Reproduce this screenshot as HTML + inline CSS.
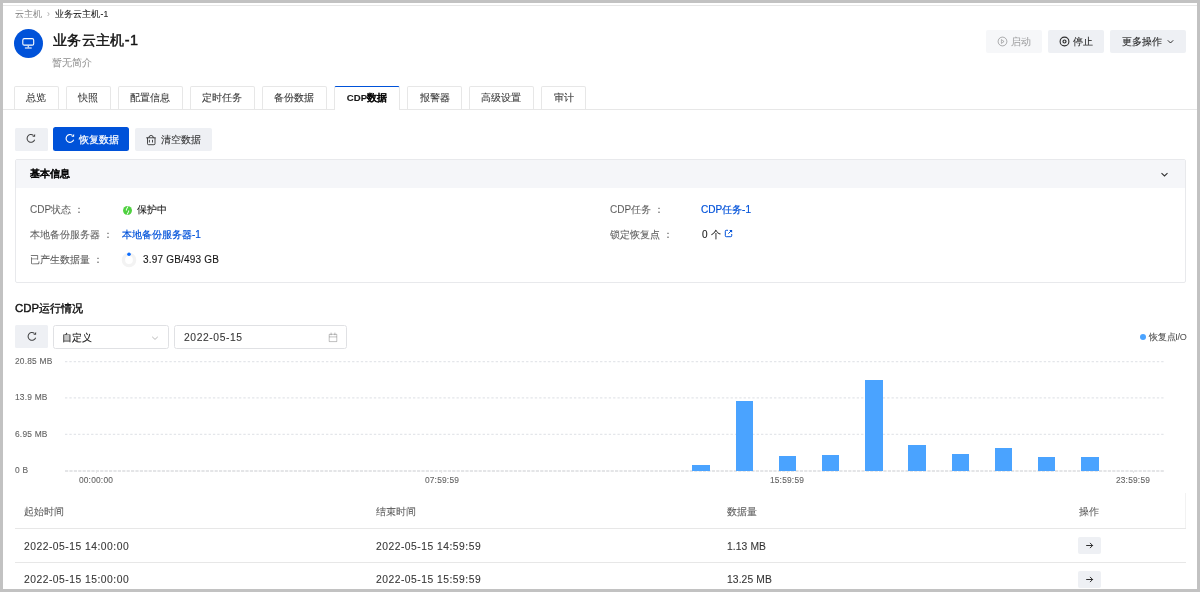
<!DOCTYPE html>
<html><head><meta charset="utf-8">
<style>
*{box-sizing:border-box;margin:0;padding:0}
html,body{width:1200px;height:592px;overflow:hidden;background:#c2c2c2}
body{font-family:"Liberation Sans",sans-serif;color:rgba(0,0,0,.9);font-size:9.6px;position:relative;-webkit-text-stroke:.12px currentColor}
.pg{position:absolute;left:3px;top:3px;width:1194px;height:586px;background:#fff;overflow:hidden}
.a{position:absolute;white-space:nowrap;will-change:transform}
.t{line-height:12px}
.hl{position:absolute;height:1px;background:#e7e7e7}
.btn{will-change:transform;position:absolute;background:#eef0f4;border-radius:2px;display:flex;align-items:center;justify-content:center;color:rgba(0,0,0,.9)}
.tab{will-change:transform;position:absolute;top:83px;height:23px;border:1px solid #e7e7e7;border-bottom:none;border-radius:2px 2px 0 0;background:#fff;display:flex;align-items:center;justify-content:center;color:rgba(0,0,0,.75)}
.tab.on{border-top:1.6px solid #0052d9;color:rgba(0,0,0,.9);font-weight:bold;height:24px}
.lbl{color:rgba(0,0,0,.6)}
.lnk{color:#0052d9;-webkit-text-stroke:.2px #0052d9}
.ax{color:rgba(0,0,0,.6);font-size:8.4px;letter-spacing:.2px}
.td{font-size:10.3px;letter-spacing:.5px;color:rgba(0,0,0,.78)}
.bar{position:absolute;background:#4aa3ff;width:17.5px}
</style></head><body>
<div class="pg">
  <div class="hl" style="left:0;top:2px;width:1194px"></div>
  <!-- breadcrumb -->
  <div class="a t" style="left:11.8px;top:4.5px;font-size:8.5px;color:rgba(0,0,0,.4)">云主机</div>
  <div class="a t" style="left:44px;top:4.5px;font-size:8.8px;color:rgba(0,0,0,.3)">›</div>
  <div class="a t" style="left:51.8px;top:4.5px;font-size:8.6px;letter-spacing:.1px;color:rgba(0,0,0,.85)">业务云主机-1</div>
  <!-- icon -->
  <div class="a" style="left:11.1px;top:26.2px;width:29px;height:29px;border-radius:50%;background:#0052d9">
    <svg width="29" height="29" viewBox="0 0 29 29" style="position:absolute;left:0;top:0">
      <rect x="8.8" y="9.65" width="10.9" height="6.5" rx="1.5" fill="none" stroke="#fff" stroke-width="1.1"/>
      <line x1="14.25" y1="16.7" x2="14.25" y2="18.6" stroke="#fff" stroke-width="1.1"/>
      <line x1="10.9" y1="19" x2="17.7" y2="19" stroke="#fff" stroke-width="1.1"/>
    </svg>
  </div>
  <div class="a" style="left:49.6px;top:27.6px;font-size:14.4px;line-height:18px;letter-spacing:.35px;-webkit-text-stroke:.45px rgba(0,0,0,.9);color:rgba(0,0,0,.9)">业务云主机-1</div>
  <div class="a t" style="left:48.8px;top:54.3px;font-size:10px;color:rgba(0,0,0,.4)">暂无简介</div>
  <!-- top right buttons -->
  <div class="btn" style="left:983px;top:26.5px;width:56.2px;height:23px;padding-top:1px;font-size:10.2px;background:#f6f7f9;color:rgba(0,0,0,.32)">
    <svg width="11" height="11" viewBox="0 0 11 11" style="margin-right:3.5px;margin-top:-1px"><circle cx="5.5" cy="5.5" r="4.4" fill="none" stroke="rgba(0,0,0,.3)" stroke-width="1"/><path d="M4.4 3.6 L7.1 5.5 L4.4 7.4Z" fill="none" stroke="rgba(0,0,0,.3)" stroke-width=".9"/></svg>启动</div>
  <div class="btn" style="left:1045px;top:26.5px;width:56px;height:23px;padding-top:1px;font-size:10.2px;color:rgba(0,0,0,.82)">
    <svg width="11" height="11" viewBox="0 0 11 11" style="margin-right:3.5px;margin-top:-1px"><circle cx="5.5" cy="5.5" r="4.4" fill="none" stroke="rgba(0,0,0,.82)" stroke-width="1.1"/><circle cx="5.5" cy="5.5" r="1.5" fill="none" stroke="rgba(0,0,0,.82)" stroke-width="1.2"/></svg>停止</div>
  <div class="btn" style="left:1107px;top:26.5px;width:76px;height:23px;padding-top:1px;font-size:10.2px;color:rgba(0,0,0,.82)">更多操作<svg width="9" height="9" viewBox="0 0 9 9" style="margin-left:4px;margin-top:-1px"><path d="M1.8 3.3 L4.5 6 L7.2 3.3" fill="none" stroke="rgba(0,0,0,.8)" stroke-width="1"/></svg></div>
  <!-- tabs -->
  <div class="hl" style="left:0;top:106px;width:1194px"></div>
  <div class="tab" style="left:11px;width:44.8px">总览</div>
  <div class="tab" style="left:63.3px;width:44.5px">快照</div>
  <div class="tab" style="left:115.3px;width:64.5px">配置信息</div>
  <div class="tab" style="left:187.3px;width:64.5px">定时任务</div>
  <div class="tab" style="left:259.3px;width:64.5px">备份数据</div>
  <div class="tab on" style="left:331.3px;width:66px">CDP数据</div>
  <div class="tab" style="left:404.2px;width:55px">报警器</div>
  <div class="tab" style="left:466px;width:64.5px">高级设置</div>
  <div class="tab" style="left:538px;width:45px">审计</div>

  <!-- action buttons -->
  <div class="btn" style="left:11.9px;top:124.5px;width:32.5px;height:22.8px;border-radius:1.5px"><svg width="12" height="12" viewBox="0 0 12 12"><path d="M9.66 6.73 A3.9 3.9 0 1 1 8.24 2.21" fill="none" stroke="rgba(0,0,0,.72)" stroke-width="1.05"/><path d="M7.3 3.7 L10.1 3.7 L10.1 0.9 Z" fill="rgba(0,0,0,.72)"/></svg></div>
  <div class="btn" style="left:50.4px;top:124.4px;width:76.2px;height:23.5px;background:#0052d9;color:#fff;font-size:10.2px;-webkit-text-stroke:.2px #fff;border-radius:2.5px">
    <span style="display:inline-block;width:12px;height:12px;margin-right:3px;margin-top:1px"><svg width="12" height="12" viewBox="0 0 12 12"><path d="M9.66 6.73 A3.9 3.9 0 1 1 8.24 2.21" fill="none" stroke="#fff" stroke-width="1.15"/><path d="M7.3 3.7 L10.1 3.7 L10.1 0.9 Z" fill="#fff"/></svg></span><span style="position:relative;top:1px">恢复数据</span></div>
  <div class="btn" style="left:132.3px;top:124.5px;width:76.5px;height:22.8px;font-size:10.2px;color:rgba(0,0,0,.75)">
    <svg width="12" height="12" viewBox="0 0 12 12" style="margin-right:4px;margin-top:1px"><path d="M1.2 3.8 H10.7 M3.9 3.8 A2.2 2.4 0 0 1 8.3 3.8 M2.5 3.8 V9.6 Q2.5 10.7 3.6 10.7 H8.9 Q10 10.7 10 9.6 V3.8 M4.4 5.8 V8.5 M7.5 5.8 V8.5" fill="none" stroke="rgba(0,0,0,.7)" stroke-width="1"/></svg><span style="position:relative;top:1px">清空数据</span></div>

  <!-- basic info panel -->
  <div class="a" style="left:11.6px;top:156.3px;width:1171px;height:123.5px;border:1px solid #e8e9ec;border-radius:2px">
    <div style="position:absolute;left:0;top:0;right:0;height:27.8px;background:#f5f6f9"></div>
  </div>
  <div class="a t" style="left:27px;top:164.5px;font-size:10px;font-weight:bold">基本信息</div>
  <svg class="a" style="left:1157px;top:167px" width="9" height="9" viewBox="0 0 9 9"><path d="M1.5 3.2 L4.5 6 L7.5 3.2" fill="none" stroke="rgba(0,0,0,.8)" stroke-width="1.1"/></svg>

  <div class="a t lbl" style="left:27px;top:201px;font-size:10px">CDP状态 ：</div>
  <div class="a t lbl" style="left:27px;top:225.5px;font-size:10px">本地备份服务器 ：</div>
  <div class="a t lbl" style="left:27px;top:250.5px;font-size:10px">已产生数据量 ：</div>
  <svg class="a" style="left:120.1px;top:202.6px" width="9" height="9" viewBox="0 0 9 9"><circle cx="4.5" cy="4.5" r="4.45" fill="#4fd140"/><path d="M5 0.3 L3.1 4.1 L5.9 4.9 L4 8.7" fill="none" stroke="#fff" stroke-width="1"/><circle cx="4.5" cy="4.5" r=".9" fill="#4fd140"/></svg>
  <div class="a t" style="left:133.5px;top:201px;font-size:10px">保护中</div>
  <div class="a t lnk" style="left:119px;top:225.5px;font-size:10px">本地备份服务器-1</div>
  <svg class="a" style="left:118px;top:249px" width="16" height="16" viewBox="0 0 16 16"><circle cx="8" cy="8" r="5.6" fill="none" stroke="#f3f3f3" stroke-width="3.4"/><circle cx="8" cy="2.2" r="1.8" fill="#0a6cff"/></svg>
  <div class="a t" style="left:139.5px;top:250.5px;font-size:10px;letter-spacing:.2px">3.97 GB/493 GB</div>

  <div class="a t lbl" style="left:606.5px;top:201px;font-size:10px">CDP任务 ：</div>
  <div class="a t lbl" style="left:606.5px;top:225.5px;font-size:10px">锁定恢复点 ：</div>
  <div class="a t lnk" style="left:698.3px;top:201px;font-size:10px">CDP任务-1</div>
  <div class="a t" style="left:698.6px;top:225.5px;font-size:10px;word-spacing:.6px">0 个</div>
  <svg class="a" style="left:720.8px;top:226.3px" width="9" height="9" viewBox="0 0 9 9"><path d="M4 1.3 H2.2 Q1.3 1.3 1.3 2.2 V6.8 Q1.3 7.7 2.2 7.7 H6.8 Q7.7 7.7 7.7 6.8 V5" fill="none" stroke="#0052d9" stroke-width="1"/><path d="M7.7 1.3 L4.3 4.7" stroke="#0052d9" stroke-width="1"/><path d="M5.2 0.9 H8.1 V3.8 Z" fill="#0052d9"/></svg>

  <!-- CDP run -->
  <div class="a" style="left:11.7px;top:297.6px;font-size:11.4px;line-height:15px;-webkit-text-stroke:.4px rgba(0,0,0,.9)">CDP运行情况</div>
  <div class="btn" style="left:11.7px;top:322.2px;width:33px;height:23.3px;border-radius:1.5px"><svg width="12" height="12" viewBox="0 0 12 12"><path d="M9.66 6.73 A3.9 3.9 0 1 1 8.24 2.21" fill="none" stroke="rgba(0,0,0,.72)" stroke-width="1.05"/><path d="M7.3 3.7 L10.1 3.7 L10.1 0.9 Z" fill="rgba(0,0,0,.72)"/></svg></div>
  <div class="a" style="left:50.3px;top:322.3px;width:116.4px;height:24px;border:1px solid #e0e1e4;border-radius:2.5px"></div>
  <div class="a t" style="left:59px;top:328.5px;font-size:10.2px">自定义</div>
  <svg class="a" style="left:148px;top:331px" width="8" height="8" viewBox="0 0 8 8"><path d="M1.2 2.8 L4 5.4 L6.8 2.8" fill="none" stroke="rgba(0,0,0,.35)" stroke-width=".8"/></svg>
  <div class="a" style="left:171px;top:322.3px;width:172.7px;height:24px;border:1px solid #e0e1e4;border-radius:2.5px"></div>
  <div class="a t" style="left:180.6px;top:329px;font-size:10.3px;letter-spacing:.6px;color:rgba(0,0,0,.78)">2022-05-15</div>
  <svg class="a" style="left:325.4px;top:328.5px" width="10" height="11" viewBox="0 0 10 11"><path d="M1.2 2.3 H8.8 V9.6 H1.2Z M1.2 4.9 H8.8 M3.1 .6 V3.2 M6.9 .6 V3.2" fill="none" stroke="rgba(0,0,0,.28)" stroke-width=".9"/></svg>
  <div class="a" style="left:1137.1px;top:330.9px;width:6px;height:6px;border-radius:50%;background:#4aa3ff"></div>
  <div class="a t" style="left:1146px;top:328px;font-size:9px;letter-spacing:-.25px;color:rgba(0,0,0,.65)">恢复点I/O</div>
  <!-- chart -->
  <svg class="a" style="left:61.8px;top:350px" width="1100" height="90" viewBox="0 0 1100 90"><line x1="0" y1="8.60" x2="1100" y2="8.60" stroke="#e4e6ea" stroke-width="1.3" stroke-dasharray="2.35 2"/><line x1="0" y1="44.90" x2="1100" y2="44.90" stroke="#e4e6ea" stroke-width="1.3" stroke-dasharray="2.35 2"/><line x1="0" y1="81.40" x2="1100" y2="81.40" stroke="#e4e6ea" stroke-width="1.3" stroke-dasharray="2.35 2"/></svg>
  <div class="a ax" style="left:11.7px;top:351.8px;line-height:12px">20.85 MB</div>
  <div class="a ax" style="left:11.7px;top:388.1px;line-height:12px">13.9 MB</div>
  <div class="a ax" style="left:11.7px;top:424.7px;line-height:12px">6.95 MB</div>
  <div class="a ax" style="left:11.7px;top:460.8px;line-height:12px">0 B</div>
  <svg class="a" style="left:62px;top:465px" width="1100" height="6"><line x1="0" y1="3" x2="1100" y2="3" stroke="#dcdde0" stroke-width="1.6" stroke-dasharray="3.2 1.2"/></svg>
  <div class="a" style="left:92.75px;top:468px;width:1px;height:2px;background:#e6e6e6"></div>
  <div class="a ax" style="left:63.25px;width:60px;text-align:center;top:471.4px;line-height:12px">00:00:00</div>
  <div class="a" style="left:438.35px;top:468px;width:1px;height:2px;background:#e6e6e6"></div>
  <div class="a ax" style="left:408.85px;width:60px;text-align:center;top:471.4px;line-height:12px">07:59:59</div>
  <div class="a" style="left:783.95px;top:468px;width:1px;height:2px;background:#e6e6e6"></div>
  <div class="a ax" style="left:754.45px;width:60px;text-align:center;top:471.4px;line-height:12px">15:59:59</div>
  <div class="a" style="left:1129.55px;top:468px;width:1px;height:2px;background:#e6e6e6"></div>
  <div class="a ax" style="left:1100.05px;width:60px;text-align:center;top:471.4px;line-height:12px">23:59:59</div>
  <div class="bar" style="left:689.30px;top:461.8px;height:6.2px"></div>
  <div class="bar" style="left:732.50px;top:398.4px;height:69.6px"></div>
  <div class="bar" style="left:775.70px;top:452.9px;height:15.1px"></div>
  <div class="bar" style="left:818.90px;top:451.7px;height:16.3px"></div>
  <div class="bar" style="left:862.10px;top:376.5px;height:91.5px"></div>
  <div class="bar" style="left:905.30px;top:441.8px;height:26.2px"></div>
  <div class="bar" style="left:948.50px;top:450.7px;height:17.3px"></div>
  <div class="bar" style="left:991.70px;top:445.0px;height:23.0px"></div>
  <div class="bar" style="left:1034.90px;top:454.3px;height:13.7px"></div>
  <div class="bar" style="left:1078.10px;top:454.1px;height:13.9px"></div>
  <div class="a" style="left:1182px;top:490px;width:1px;height:35.4px;background:#f2f2f2"></div>
  <div class="hl" style="left:11.6px;top:524.9px;width:1171px;background:#e7e7e7"></div>
  <div class="hl" style="left:11.6px;top:558.9px;width:1171px;background:#e7e7e7"></div>
  <div class="a t" style="left:20.8px;top:502.5px;font-size:10.2px;color:rgba(0,0,0,.6)">起始时间</div>
  <div class="a t" style="left:372.6px;top:502.5px;font-size:10.2px;color:rgba(0,0,0,.6)">结束时间</div>
  <div class="a t" style="left:724.2px;top:502.5px;font-size:10.2px;color:rgba(0,0,0,.6)">数据量</div>
  <div class="a t" style="left:1076.2px;top:502.5px;font-size:10.2px;color:rgba(0,0,0,.6)">操作</div>
  <div class="a t td" style="left:20.8px;top:537.6px">2022-05-15 14:00:00</div>
  <div class="a t td" style="left:372.6px;top:537.6px">2022-05-15 14:59:59</div>
  <div class="a t td" style="left:724.2px;top:537.6px;letter-spacing:.1px">1.13 MB</div>
  <div class="btn" style="left:1074.5px;top:534px;width:22.8px;height:17px"><svg width="9" height="9" viewBox="0 0 9 9"><path d="M1.2 4.5 H7.6 M5 1.9 L7.6 4.5 L5 7.1" fill="none" stroke="rgba(0,0,0,.85)" stroke-width=".95"/></svg></div>
  <div class="a t td" style="left:20.8px;top:571.2px">2022-05-15 15:00:00</div>
  <div class="a t td" style="left:372.6px;top:571.2px">2022-05-15 15:59:59</div>
  <div class="a t td" style="left:724.2px;top:571.2px;letter-spacing:.1px">13.25 MB</div>
  <div class="btn" style="left:1074.5px;top:568px;width:22.8px;height:17px"><svg width="9" height="9" viewBox="0 0 9 9"><path d="M1.2 4.5 H7.6 M5 1.9 L7.6 4.5 L5 7.1" fill="none" stroke="rgba(0,0,0,.85)" stroke-width=".95"/></svg></div>
</div>
</body></html>
